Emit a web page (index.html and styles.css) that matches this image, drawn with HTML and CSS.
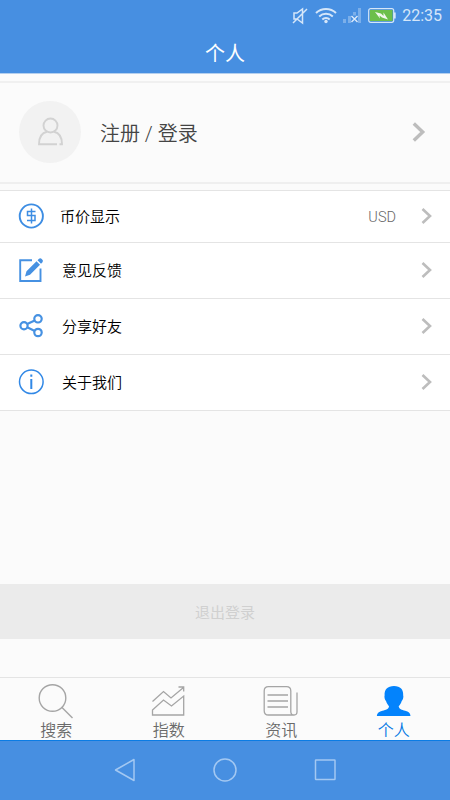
FILE: index.html
```html
<!DOCTYPE html>
<html lang="zh-CN">
<head>
  <meta charset="UTF-8">
  <meta name="viewport" content="width=device-width, initial-scale=1.0">
  <title>个人</title>
  <link rel="stylesheet" href="styles.css">
</head>
<body>
  <div class="app">
    <header class="header">
      <!-- 状态栏 -->
      <div class="status-bar">
        <svg class="status-mute" width="16" height="18" viewBox="0 0 16 18">
          <path d="M2 6v6h3l5.500 4v-14l-5.500 4z M1 16L15 2" fill="none" stroke="currentColor" stroke-width="1.5"/>
        </svg>
        <svg class="status-wifi" width="22" height="17" viewBox="0 0 22 17">
          <path d="M1 6a14.5 14.5 0 0 1 20 0 M4.2 9.4a10 10 0 0 1 13.6 0 M7.3 12.5a5.6 5.6 0 0 1 7.4 0" fill="none" stroke="currentColor" stroke-width="2"/>
          <circle cx="11" cy="14.500" r="1.700" fill="currentColor"/>
        </svg>
        <svg class="status-signal" width="18" height="16" viewBox="0 0 18 16">
          <path d="M0 11h3v4H0z M5 8h3v7H5z M10 4h3v11h-3z M15 0h3v15h-3z" fill="#7bafea"/>
          <path d="M8 7.500h7v7.500h-7z" fill="#478fe1"/>
          <path d="M8.500 8l6 6 M14.500 8l-6 6" stroke="#dcebfb" stroke-width="1.4"/>
        </svg>
        <svg class="status-battery" width="28" height="15" viewBox="0 0 28 15">
          <rect x="0.7" y="0.7" width="25" height="13.6" rx="2" fill="#3b86cf" stroke="#d5e6f9" stroke-width="1.2"/>
          <rect x="2" y="2" width="22.5" height="11" fill="#6cbf4b"/>
          <path d="M26 4.5h1.7v6H26z" fill="#d5e6f9"/>
          <path d="M7 4l6 1.500 2.500 2.500 0-3.500 4.500 7-6-2-2.500-2 .5 3z" fill="#f2f8f0"/>
        </svg>
        <span class="status-time">22:35</span>
      </div>
      <h1 class="title">个人</h1>
    </header>

    <main class="content">
      <!-- 注册登录 -->
      <a class="profile">
        <span class="avatar">
          <svg width="26" height="30" viewBox="0 0 26 30" fill="none" stroke="#d2d2d2" stroke-width="1.9">
            <ellipse cx="13.500" cy="8.500" rx="7" ry="7"/>
            <path d="M10 14.800C4.500 16 2 20.500 2 27.200H20 M17 14.800C22.500 16 25 20.500 25 27.200H22.500"/>
          </svg>
        </span>
        <span class="profile-text">注册 / 登录</span>
        <svg class="arrow arrow-big" width="14" height="20" viewBox="0 0 14 20">
          <path d="M1.800 1.500L10.700 10L1.800 18.500"/>
        </svg>
      </a>

      <!-- 菜单列表 -->
      <ul class="menu">
        <li class="menu-item menu-item-currency">
          <svg class="menu-icon" width="26" height="26" viewBox="0 0 26 26" fill="none" stroke="#3d8de3">
            <circle cx="13.300" cy="13" r="11.600" stroke-width="1.900"/>
            <path d="M17.500 8.500H9.500V12.500H17V17.500H9" stroke-width="1.500"/>
            <path d="M13.500 5.500V20.500" stroke-width="1.500"/>
          </svg>
          <span class="menu-text">币价显示</span>
          <span class="menu-value">USD</span>
          <svg class="arrow" width="12" height="16" viewBox="0 0 12 16"><path d="M1.500 1L9 8L1.500 15"/></svg>
        </li>
        <li class="menu-item">
          <svg class="menu-icon" width="26" height="26" viewBox="0 0 26 26" fill="none" stroke="#4691e2">
            <path d="M14 3.300H2.200V24H22.500V11.500" stroke-width="1.900"/>
            <path d="M7 19.500L8.500 14.300L18.500 4.300L22 7.800L12 17.800L7 19.500Z M19.500 3.300L21 1.800Q22.300 .6 24 2.200T24.500 5.300L23 6.800Z" fill="#4691e2" stroke="none"/>
          </svg>
          <span class="menu-text">意见反馈</span>
          <svg class="arrow" width="12" height="16" viewBox="0 0 12 16"><path d="M1.500 1L9 8L1.500 15"/></svg>
        </li>
        <li class="menu-item">
          <svg class="menu-icon" width="26" height="26" viewBox="0 0 26 26" fill="none" stroke="#4691e2" stroke-width="2.200">
            <circle cx="6" cy="12.700" r="3.600"/>
            <circle cx="20" cy="5.800" r="3.700"/>
            <circle cx="20" cy="19.500" r="3.700"/>
            <path d="M9.200 11.100L16.700 7.500 M9.200 14.300L16.700 17.900"/>
          </svg>
          <span class="menu-text">分享好友</span>
          <svg class="arrow" width="12" height="16" viewBox="0 0 12 16"><path d="M1.500 1L9 8L1.500 15"/></svg>
        </li>
        <li class="menu-item">
          <svg class="menu-icon" width="26" height="26" viewBox="0 0 26 26" fill="none" stroke="#3188e6">
            <circle cx="13.300" cy="12.800" r="11.800" stroke-width="1.500"/>
            <path d="M13.300 10V20 M13.300 5.500V7.800" stroke-width="2"/>
          </svg>
          <span class="menu-text">关于我们</span>
          <svg class="arrow" width="12" height="16" viewBox="0 0 12 16"><path d="M1.500 1L9 8L1.500 15"/></svg>
        </li>
      </ul>

      <button class="logout">退出登录</button>
    </main>

    <!-- 底部标签栏 -->
    <nav class="tabs">
      <a class="tab">
        <svg width="36" height="36" viewBox="0 0 36 36" fill="none" stroke="#a5a5a5" stroke-width="1.400">
          <circle cx="14.500" cy="15" r="13.300"/>
          <path d="M23.500 24L34.500 35"/>
        </svg>
        <span>搜索</span>
      </a>
      <a class="tab">
        <svg width="36" height="36" viewBox="0 0 36 36" fill="none" stroke="#a5a5a5" stroke-width="1.300">
          <path d="M1.500 18.500L12.500 8.500L20 15L32.500 4.500 M27.500 4H32.700V8.500"/>
          <path d="M1.500 27L12.500 17L20.500 23L32.700 13V32H1.500Z"/>
        </svg>
        <span>指数</span>
      </a>
      <a class="tab">
        <svg width="36" height="36" viewBox="0 0 36 36" fill="none" stroke="#a5a5a5" stroke-width="1.300">
          <path d="M31 32H5.500Q1.200 32 1.200 27.700V8Q1.200 3.700 5.500 3.700H23.500Q27.800 3.700 27.800 8V28.500Q27.800 32 31 32T34 28.500V9.500"/>
          <path d="M4.500 12H25 M4.500 18H25 M4.500 24H25"/>
        </svg>
        <span>资讯</span>
      </a>
      <a class="tab active">
        <svg width="36" height="36" viewBox="0 0 36 36" fill="#0383fc">
          <path d="M18 3C11.500 3 8.300 6.500 8.600 12.500C8 14 9 17 10 18C10.800 20.500 12 22 13 23.200C12.800 26 10 26.800 6.500 27.800C3.200 28.700 1 30 .8 33H34.500C34.300 30 32.500 28.700 29.200 27.800C25.800 26.800 23 26 22.700 23.200C23.900 22 25 20.500 25.700 18C26.800 17 27.800 14 27.200 12.500C27.500 6.500 24.500 3 18 3Z"/>
        </svg>
        <span>个人</span>
      </a>
    </nav>

    <!-- 系统导航键 -->
    <div class="system-nav">
      <svg width="24" height="24" viewBox="0 0 24 24"><path d="M21 1.500V22.500L2.500 12Z"/></svg>
      <svg width="24" height="24" viewBox="0 0 24 24"><circle cx="12" cy="12" r="11"/></svg>
      <svg width="24" height="24" viewBox="0 0 24 24"><rect x="2.500" y="2" width="19.500" height="19.500" rx="0.500"/></svg>
    </div>
  </div>
</body>
</html>
```
FILE: styles.css
```css
* {
  box-sizing: border-box;
}

body {
  margin: 0;
  font-family: Roboto, "Noto Sans CJK SC", sans-serif;
  font-weight: 350;
  background-color: #fbfbfb;
  color: #000;
}

.app {
  display: flex;
  flex-direction: column;
  width: 450px;
  height: 800px;
}

/* 顶部 */
.header {
  height: 74px;
  background-color: #478fe1;
  border-bottom: 1px solid #b4cfee;
}

.status-bar {
  display: flex;
  align-items: center;
  justify-content: flex-end;
  height: 31px;
  padding-right: 8px;
  color: #d5e6f9;
}

.status-mute {
  margin-right: 7px;
}

.status-wifi {
  margin-right: 6px;
}

.status-signal {
  margin-right: 7px;
}

.status-battery {
  margin-right: 6px;
}

.status-time {
  font-size: 16px;
  font-weight: 400;
  line-height: 31px;
}

.title {
  margin: 0;
  font-size: 20px;
  font-weight: 400;
  line-height: 46px;
  text-align: center;
  color: #fff;
}

/* 内容 */
.content {
  flex: 1;
  display: flex;
  flex-direction: column;
}

.profile {
  display: flex;
  align-items: center;
  height: 103px;
  margin-top: 7px;
  padding: 0 24px 1px 19px;
  border-top: 2px solid #f0f0f0;
  border-bottom: 2px solid #efefef;
}

.avatar {
  display: flex;
  align-items: center;
  justify-content: center;
  width: 62px;
  height: 62px;
  margin-right: 19px;
  border-radius: 50%;
  background-color: #f2f2f2;
}

.profile-text {
  flex: 1;
  padding-top: 1px;
  font-size: 20px;
  color: #444;
}

.arrow {
  fill: none;
  stroke: #bdbdbd;
  stroke-width: 2.6;
}

.arrow-big {
  stroke-width: 3.4;
}

.menu {
  margin: 6px 0 0;
  padding: 0;
  list-style: none;
  background-color: #fff;
  border-top: 1px solid #e4e4e4;
}

.menu-item {
  display: flex;
  align-items: center;
  height: 56px;
  padding: 0 17px 1px 18px;
  border-bottom: 1px solid #e4e4e4;
}

.menu-item-currency {
  height: 52px;
}

.menu-icon {
  margin-right: 18px;
}

.menu-item-currency .menu-icon {
  margin-right: 16px;
}

.menu-text {
  flex: 1;
  padding-top: 2px;
  font-size: 15px;
  line-height: 22px;
}

.menu-value {
  margin-right: 25px;
  padding-top: 2px;
  font-size: 14.5px;
  font-weight: 300;
  color: #666;
}

.logout {
  height: 55px;
  margin-top: auto;
  margin-bottom: 38px;
  padding: 0;
  border: none;
  background-color: #ebebeb;
  font-family: inherit;
  font-size: 15px;
  color: #d0d0d0;
}

/* 标签栏 */
.tabs {
  display: flex;
  height: 63px;
  border-top: 1px solid #e4e4e4;
}

.tab {
  flex: 1;
  display: flex;
  flex-direction: column;
  align-items: center;
  padding-top: 5px;
  font-size: 16px;
  line-height: 24px;
  color: #6a6a6a;
}

.tab svg {
  flex-shrink: 0;
}

.tab.active {
  color: #0378e4;
}

/* 系统导航 */
.system-nav {
  display: flex;
  justify-content: center;
  align-items: center;
  gap: 76px;
  height: 60px;
  padding-bottom: 2px;
  background-color: #478fe1;
  border-top: 1px solid #0b7ce4;
}

.system-nav svg {
  fill: none;
  stroke: #a3c8f2;
  stroke-width: 1.5;
  stroke-linejoin: round;
}
```
